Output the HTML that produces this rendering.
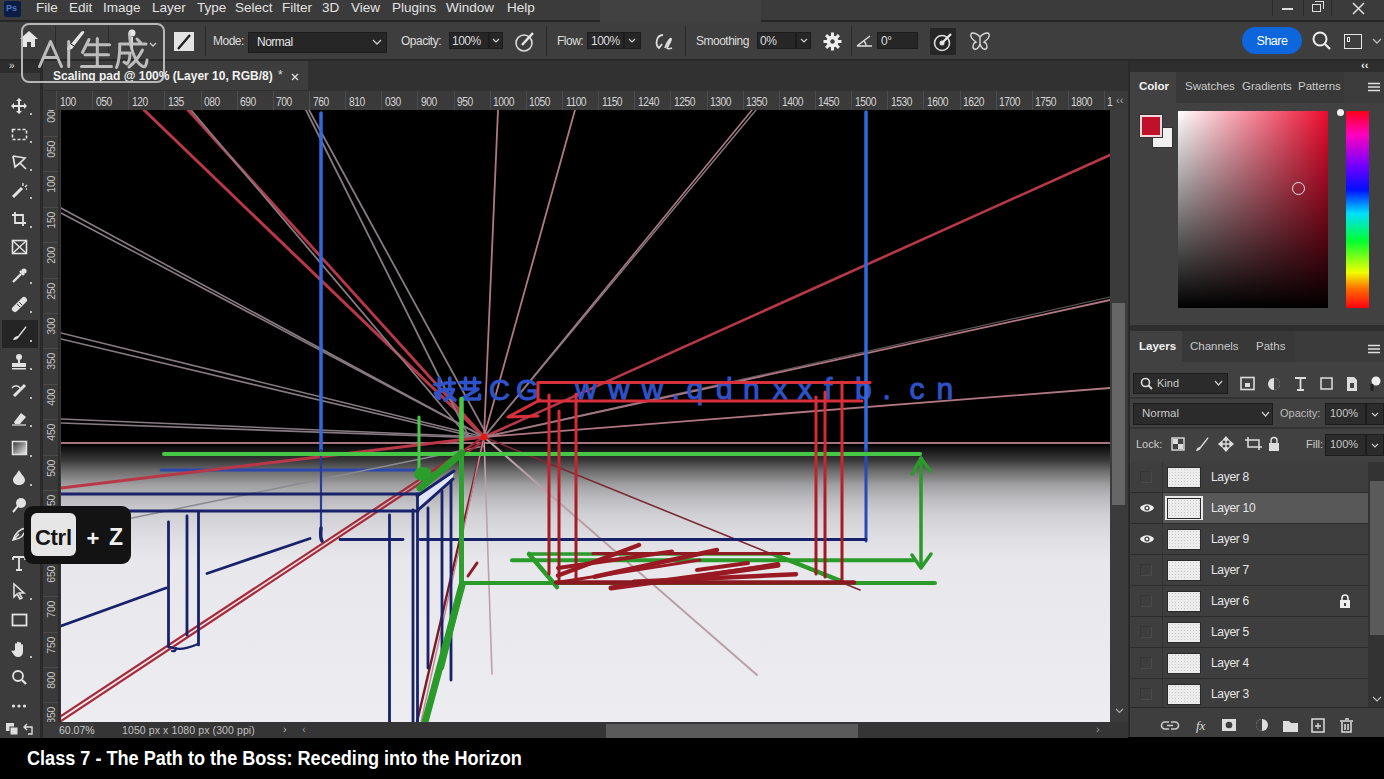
<!DOCTYPE html>
<html><head><meta charset="utf-8">
<style>
*{margin:0;padding:0;box-sizing:border-box}
html,body{width:1384px;height:779px;overflow:hidden;background:#000;font-family:"Liberation Sans",sans-serif;color:#d8d8d8}
.a{position:absolute}
svg{position:absolute;overflow:visible}
#menubar{left:0;top:0;width:1384px;height:20px;background:#3b3b3b}
#menubar span{position:absolute;top:1px;font-size:13.5px;line-height:14px;color:#e2e2e2}
#mline{left:0;top:20px;width:1384px;height:2px;background:#262626}
#optbar{left:0;top:22px;width:1384px;height:37px;background:#3e3e3e}
#oline{left:0;top:59px;width:1384px;height:2px;background:#282828}
.ot{position:absolute;font-size:12px;line-height:14px;color:#dcdcdc;white-space:nowrap;letter-spacing:-0.5px}
.box{position:absolute;background:#262626;border:1px solid #1c1c1c}
.sep{position:absolute;width:1px;background:#2a2a2a}
#tabrow{left:40px;top:61px;width:1088px;height:30px;background:#313131}
#toolbar{left:0;top:73px;width:40px;height:665px;background:#3c3c3c}
#rulerh{left:43px;top:91px;width:1085px;height:19px;background:#3a3a3a}
#rulerv{left:43px;top:110px;width:18px;height:612px;background:#3a3a3a;overflow:hidden}
#canvas{left:61px;top:110px;width:1049px;height:612px;overflow:hidden;background:linear-gradient(#000 0,#000 335px,#0e0e0e 337px,#383838 350px,#6c6c6c 361px,#a0a0a2 375px,#bcbcc0 389px,#d0d0d5 405px,#e0e0e4 430px,#e8e8ec 452px,#edecf0 612px)}
#vscroll{left:1110px;top:110px;width:18px;height:612px;background:#3b3b3b}
#status{left:43px;top:722px;width:1085px;height:16px;background:#353535}
#rpanel{left:1128px;top:61px;width:256px;height:676px;background:#414141}
#caption{left:27px;top:746px;font-size:20px;line-height:24px;font-weight:bold;color:#fff;white-space:nowrap;transform:scaleX(0.905);transform-origin:0 0}
.rl{position:absolute;top:6px;font-size:12.5px;line-height:11px;color:#d4d4d4;letter-spacing:-0.6px;transform:scaleX(0.82);transform-origin:0 0}
.rvl{position:absolute;left:3px;font-size:10.5px;line-height:11px;color:#c4c4c4;writing-mode:vertical-rl;transform:rotate(180deg);letter-spacing:-0.3px}
.pt{position:absolute;font-size:11.5px;line-height:13px;color:#c8c8c8;white-space:nowrap}
.thumb{background-color:#ececec;background-image:radial-gradient(#c8c8c8 0.6px,transparent 0.8px);background-size:3px 3px;border:1px solid #2a2a2a}
</style></head><body>
<!-- MENU BAR -->
<div id="menubar" class="a">
  <div class="a" style="left:4px;top:1px;width:17px;height:16px;background:#0a1d44;border-radius:2px"></div>
  <div class="a" style="left:6px;top:3px;font-size:9px;font-weight:bold;color:#4a78c0">Ps</div>
  <span style="left:36px">File</span><span style="left:69px">Edit</span><span style="left:103px">Image</span><span style="left:152px">Layer</span><span style="left:197px">Type</span><span style="left:235px">Select</span><span style="left:282px">Filter</span><span style="left:322px">3D</span><span style="left:351px">View</span><span style="left:392px">Plugins</span><span style="left:446px">Window</span><span style="left:507px">Help</span>
  <div class="a" style="left:600px;top:0;width:161px;height:28px;background:#414141"></div>
  <div class="a" style="left:1272px;top:0;width:1px;height:16px;background:#2c2c2c"></div>
  <div class="a" style="left:1303px;top:0;width:1px;height:16px;background:#2c2c2c"></div>
  <div class="a" style="left:1331px;top:0;width:1px;height:16px;background:#2c2c2c"></div>
  <div class="a" style="left:1282px;top:8px;width:11px;height:2px;background:#ddd"></div>
  <div class="a" style="left:1312px;top:4px;width:9px;height:8px;border:1.5px solid #ddd"></div>
  <div class="a" style="left:1315px;top:1px;width:9px;height:8px;border-top:1.5px solid #ddd;border-right:1.5px solid #ddd"></div>
  <svg style="left:1352px;top:2px" width="13" height="13"><path d="M1 1L12 12M12 1L1 12" stroke="#e0e0e0" stroke-width="1.5"/></svg>
</div>
<div id="mline" class="a"></div><div class="a" style="left:600px;top:20px;width:161px;height:3px;background:#404040"></div>
<!-- OPTIONS BAR -->
<div id="optbar" class="a">
  <svg style="left:19px;top:8px" width="20" height="18"><path d="M10 1L1 9H4V17H8V12H12V17H16V9H19Z" fill="#e6e6e6"/></svg>
  <div class="sep" style="left:55px;top:4px;height:30px"></div>
  <svg style="left:62px;top:6px" width="24" height="24"><path d="M5 22C5 19 6 17 9 16L19 4C21 2 23 3 22 5L12 18C11 21 8 22 5 22Z" fill="#e6e6e6"/><path d="M9 16L12 18" stroke="#3e3e3e" stroke-width="1.2"/></svg>
  <svg style="left:123px;top:7px" width="34" height="24"><circle cx="9" cy="4" r="3.5" fill="#e8e8e8"/><path d="M9 8V22" stroke="#ddd" stroke-width="2"/><path d="M27 14L30 17L33 14" stroke="#ccc" fill="none" stroke-width="1.3"/></svg>
  <div class="sep" style="left:108px;top:4px;height:30px"></div>
  <div class="a" style="left:174px;top:10px;width:20px;height:19px;background:#e4e4e4"></div>
  <svg style="left:174px;top:10px" width="20" height="19"><path d="M4 17L16 3" stroke="#222" stroke-width="2.4"/></svg>
  <div class="sep" style="left:205px;top:4px;height:30px"></div>
  <div class="ot" style="left:213px;top:12px">Mode:</div>
  <div class="box" style="left:248px;top:10px;width:139px;height:21px"></div>
  <div class="ot" style="left:257px;top:13px;color:#e4e4e4">Normal</div>
  <svg style="left:372px;top:16px" width="10" height="8"><path d="M1 2L5 6L9 2" stroke="#ccc" fill="none" stroke-width="1.3"/></svg>
  <div class="ot" style="left:401px;top:12px">Opacity:</div>
  <div class="box" style="left:449px;top:10px;width:40px;height:17px"></div>
  <div class="box" style="left:489px;top:10px;width:14px;height:17px"></div>
  <div class="ot" style="left:452px;top:12px">100%</div>
  <svg style="left:492px;top:15px" width="8" height="6"><path d="M1 2L4 5L7 2" stroke="#ccc" fill="none" stroke-width="1.2"/></svg>
  <svg style="left:514px;top:9px" width="22" height="22"><circle cx="10" cy="12" r="8" stroke="#d8d8d8" stroke-width="1.6" fill="none"/><path d="M8 14L19 2" stroke="#e8e8e8" stroke-width="2.5"/></svg>
  <div class="sep" style="left:546px;top:4px;height:30px"></div>
  <div class="ot" style="left:557px;top:12px">Flow:</div>
  <div class="box" style="left:587px;top:10px;width:37px;height:17px"></div>
  <div class="box" style="left:624px;top:10px;width:17px;height:17px"></div>
  <div class="ot" style="left:591px;top:12px">100%</div>
  <svg style="left:628px;top:15px" width="8" height="6"><path d="M1 2L4 5L7 2" stroke="#ccc" fill="none" stroke-width="1.2"/></svg>
  <svg style="left:653px;top:10px" width="22" height="20"><path d="M10 3C3 3 2 13 6 16L9 12M12 16C16 6 20 4 17 10C14 16 12 18 19 16" stroke="#ddd" fill="none" stroke-width="1.8"/></svg>
  <div class="sep" style="left:685px;top:4px;height:30px"></div>
  <div class="ot" style="left:696px;top:12px">Smoothing</div>
  <div class="box" style="left:757px;top:10px;width:39px;height:17px"></div>
  <div class="box" style="left:796px;top:10px;width:15px;height:17px"></div>
  <div class="ot" style="left:760px;top:12px">0%</div>
  <svg style="left:800px;top:15px" width="8" height="6"><path d="M1 2L4 5L7 2" stroke="#ccc" fill="none" stroke-width="1.2"/></svg>
  <svg style="left:823px;top:10px" width="20" height="20"><g transform="translate(9.5,9.5)"><circle r="6" fill="#eee"/><circle r="2.2" fill="#3e3e3e"/><path d="M0 -9V9M-9 0H9M-6.4 -6.4L6.4 6.4M6.4 -6.4L-6.4 6.4" stroke="#eee" stroke-width="3"/><circle r="2.2" fill="#3e3e3e"/></g></svg>
  <div class="sep" style="left:851px;top:4px;height:30px"></div>
  <svg style="left:856px;top:12px" width="18" height="14"><path d="M1 12H16M1 12L14 2M8 7C9 8 10 10 10 12" stroke="#e0e0e0" fill="none" stroke-width="1.5"/></svg>
  <div class="box" style="left:877px;top:10px;width:41px;height:17px"></div>
  <div class="ot" style="left:881px;top:12px">0°</div>
  <div class="a" style="left:930px;top:6px;width:26px;height:27px;background:#262626"></div>
  <svg style="left:932px;top:9px" width="22" height="22"><circle cx="10" cy="12" r="7.5" stroke="#ddd" stroke-width="1.6" fill="none"/><circle cx="10" cy="12" r="2.5" fill="#ddd"/><path d="M10 12L19 3" stroke="#eee" stroke-width="2.2"/></svg>
  <svg style="left:969px;top:9px" width="22" height="22"><path d="M11 6C8 2 3 1 2 3C1 6 4 9 7 11C4 12 3 16 5 18C8 19 10 16 11 13C12 16 14 19 17 18C19 16 18 12 15 11C18 9 21 6 20 3C19 1 14 2 11 6ZM11 6V14" stroke="#d8d8d8" fill="none" stroke-width="1.4"/></svg>
  <div class="a" style="left:1242px;top:5px;width:60px;height:27px;border-radius:14px;background:#0d66dc"></div>
  <div class="ot" style="left:1242px;top:12px;width:60px;text-align:center;color:#fff;font-size:12.5px">Share</div>
  <svg style="left:1311px;top:8px" width="22" height="22"><circle cx="9" cy="9" r="6.5" stroke="#eee" stroke-width="2" fill="none"/><path d="M14 14L19 19" stroke="#eee" stroke-width="2.2"/></svg>
  <div class="a" style="left:1344px;top:12px;width:18px;height:15px;border:1.5px solid #e4e4e4"></div>
  <div class="a" style="left:1347px;top:15px;width:3px;height:5px;border:1px solid #e4e4e4"></div>
  <svg style="left:1372px;top:16px" width="10" height="7"><path d="M1 1L5 5L9 1" stroke="#bbb" fill="none" stroke-width="1.3"/></svg>
</div>
<div id="oline" class="a"></div>
<div id="tabrow" class="a">
  <div class="a" style="left:0;top:0;width:268px;height:29px;background:#3d3d3d"></div>
  <div class="ot" style="left:13px;top:8px;font-size:12px;font-weight:bold;color:#f2f2f2;letter-spacing:0px">Scaling pad @ 100% (Layer 10, RGB/8)</div><div class="ot" style="left:238px;top:7px;font-size:12px;color:#ddd">*</div>
  <svg style="left:251px;top:12px" width="8" height="8"><path d="M1 1L7 7M7 1L1 7" stroke="#ddd" stroke-width="1.4"/></svg>
</div>
<div class="a" style="left:0;top:61px;width:40px;height:12px;background:#2d2d2d"></div>
<div class="a" style="left:9px;top:60px;font-size:10px;color:#ddd">»</div>
<div class="a" style="left:40px;top:61px;width:3px;height:677px;background:#2a2a2a"></div>
<div id="toolbar" class="a"></div>
<div class="a" style="left:2px;top:320px;width:36px;height:28px;background:#252525"></div>
<svg style="left:11px;top:97.5px" width="17" height="17"><path d="M8 0L5 3H7V7H3V5L0 8L3 11V9H7V13H5L8 16L11 13H9V9H13V11L16 8L13 5V7H9V3H11Z" fill="#e2e2e2"/></svg><div class="a" style="left:30px;top:112.5px;width:2px;height:2px;background:#bbb"></div><svg style="left:11px;top:125.5px" width="17" height="17"><rect x="1.5" y="3.5" width="14" height="10" fill="none" stroke="#e2e2e2" stroke-width="1.6" stroke-dasharray="3 2"/></svg><div class="a" style="left:30px;top:140.5px;width:2px;height:2px;background:#bbb"></div><svg style="left:11px;top:153.5px" width="17" height="17"><path d="M2 2L14 4L9 9L15 15M2 2L4 13L9 9" fill="none" stroke="#e2e2e2" stroke-width="1.7"/></svg><div class="a" style="left:30px;top:168.5px;width:2px;height:2px;background:#bbb"></div><svg style="left:11px;top:181.5px" width="17" height="17"><path d="M2 15L11 6" stroke="#e2e2e2" stroke-width="3"/><path d="M12 1V4M14 5L16 3M15 7H16" stroke="#e2e2e2" stroke-width="1.3"/></svg><div class="a" style="left:30px;top:196.5px;width:2px;height:2px;background:#bbb"></div><svg style="left:11px;top:210.5px" width="17" height="17"><path d="M4 1V12H15M1 4H12V15" fill="none" stroke="#e2e2e2" stroke-width="1.8"/></svg><div class="a" style="left:30px;top:225.5px;width:2px;height:2px;background:#bbb"></div><svg style="left:11px;top:238.5px" width="17" height="17"><rect x="1.5" y="1.5" width="14" height="13" fill="none" stroke="#e2e2e2" stroke-width="1.6"/><path d="M2 2L15 14M15 2L2 14" stroke="#e2e2e2" stroke-width="1.4"/></svg><svg style="left:11px;top:266.5px" width="17" height="17"><path d="M2 15L10 7M9 4L13 8" stroke="#e2e2e2" stroke-width="2.4"/><circle cx="13" cy="4" r="2.6" fill="#e2e2e2"/></svg><div class="a" style="left:30px;top:281.5px;width:2px;height:2px;background:#bbb"></div><svg style="left:11px;top:295.5px" width="17" height="17"><path d="M4 13L13 4" stroke="#e2e2e2" stroke-width="6" stroke-linecap="round"/><path d="M6 8L9 11M8 6L11 9" stroke="#3c3c3c" stroke-width="1"/></svg><div class="a" style="left:30px;top:310.5px;width:2px;height:2px;background:#bbb"></div><svg style="left:11px;top:324.5px" width="17" height="17"><path d="M2 15C3 12 5 11 7 11L14 2C15 1 16 2 15 3L8 12C7 14 5 15 2 15Z" fill="#e2e2e2"/></svg><div class="a" style="left:30px;top:339.5px;width:2px;height:2px;background:#bbb"></div><svg style="left:11px;top:352.5px" width="17" height="17"><circle cx="8" cy="4" r="3" fill="#e2e2e2"/><path d="M7 6H9V10H7Z" fill="#e2e2e2"/><rect x="1" y="10" width="14" height="4" fill="#e2e2e2"/><rect x="1" y="15" width="14" height="1.5" fill="#e2e2e2"/></svg><div class="a" style="left:30px;top:367.5px;width:2px;height:2px;background:#bbb"></div><svg style="left:11px;top:381.5px" width="17" height="17"><path d="M3 14L14 3" stroke="#e2e2e2" stroke-width="3"/><path d="M1 6C3 3 7 3 9 6" stroke="#e2e2e2" fill="none" stroke-width="1.4"/></svg><div class="a" style="left:30px;top:396.5px;width:2px;height:2px;background:#bbb"></div><svg style="left:11px;top:409.5px" width="17" height="17"><path d="M3 12L10 3L15 7L9 14H4Z" fill="#e2e2e2"/><path d="M1 15H15" stroke="#e2e2e2" stroke-width="1.2"/></svg><div class="a" style="left:30px;top:424.5px;width:2px;height:2px;background:#bbb"></div><svg style="left:11px;top:439.5px" width="17" height="17"><defs><linearGradient id="gg" x1="0" y1="0" x2="1" y2="1"><stop offset="0" stop-color="#333"/><stop offset="1" stop-color="#eee"/></linearGradient></defs><rect x="1.5" y="1.5" width="14" height="13" fill="url(#gg)" stroke="#e2e2e2" stroke-width="1.5"/></svg><div class="a" style="left:30px;top:454.5px;width:2px;height:2px;background:#bbb"></div><svg style="left:11px;top:468.5px" width="17" height="17"><path d="M8 1C10 5 14 8 14 11C14 14 11 16 8 16C5 16 2 14 2 11C2 8 6 5 8 1Z" fill="#e2e2e2"/></svg><div class="a" style="left:30px;top:483.5px;width:2px;height:2px;background:#bbb"></div><svg style="left:11px;top:496.5px" width="17" height="17"><circle cx="10" cy="6" r="5" fill="#e2e2e2"/><path d="M7 9L2 15" stroke="#e2e2e2" stroke-width="2"/></svg><div class="a" style="left:30px;top:511.5px;width:2px;height:2px;background:#bbb"></div><svg style="left:11px;top:525.5px" width="17" height="17"><path d="M2 14C4 8 8 3 15 2C14 9 9 13 2 14ZM2 14L8 8" fill="none" stroke="#e2e2e2" stroke-width="1.6"/></svg><div class="a" style="left:30px;top:540.5px;width:2px;height:2px;background:#bbb"></div><svg style="left:11px;top:554.5px" width="17" height="17"><path d="M2 2H14V5M2 2V5M8 2V15M5 15H11" fill="none" stroke="#e2e2e2" stroke-width="1.8"/></svg><svg style="left:11px;top:582.5px" width="17" height="17"><path d="M3 1V14L6 11L9 16L11 15L8 10H13Z" fill="none" stroke="#e2e2e2" stroke-width="1.5"/></svg><div class="a" style="left:30px;top:597.5px;width:2px;height:2px;background:#bbb"></div><svg style="left:11px;top:611.5px" width="17" height="17"><rect x="1.5" y="2.5" width="14" height="11" fill="none" stroke="#e2e2e2" stroke-width="1.8"/></svg><svg style="left:11px;top:640.5px" width="17" height="17"><path d="M4 9V3C4 2 6 2 6 3V8V1.5C6 .5 8 .5 8 1.5V8V2C8 1 10 1 10 2V8V4C10 3 12 3 12 4V10C12 14 10 16 7 16C4 16 3 14 1 11C0 10 1 9 2 10Z" fill="#e2e2e2"/></svg><div class="a" style="left:30px;top:655.5px;width:2px;height:2px;background:#bbb"></div><svg style="left:11px;top:668.5px" width="17" height="17"><circle cx="7" cy="7" r="5" fill="none" stroke="#e2e2e2" stroke-width="1.8"/><path d="M11 11L15 15" stroke="#e2e2e2" stroke-width="2.4"/></svg><svg style="left:11px;top:697.5px" width="17" height="17"><circle cx="2.5" cy="8" r="1.6" fill="#e2e2e2"/><circle cx="8" cy="8" r="1.6" fill="#e2e2e2"/><circle cx="13.5" cy="8" r="1.6" fill="#e2e2e2"/></svg>
<svg style="left:5px;top:722px" width="34" height="14"><rect x="1" y="1" width="8" height="8" fill="#ddd"/><rect x="5" y="5" width="8" height="8" fill="#ddd" stroke="#3c3c3c"/><path d="M22 2L19 5L22 8M19 5H27V12H23" fill="none" stroke="#ddd" stroke-width="1.4"/></svg>

<div id="rulerh" class="a"><div class="a" style="left:13.0px;top:0;width:1px;height:19px;background:#4c4c4c"></div><div class="rl" style="left:16.5px">100</div><div class="a" style="left:49.1px;top:0;width:1px;height:19px;background:#4c4c4c"></div><div class="rl" style="left:52.6px">050</div><div class="a" style="left:85.3px;top:0;width:1px;height:19px;background:#4c4c4c"></div><div class="rl" style="left:88.8px">120</div><div class="a" style="left:121.4px;top:0;width:1px;height:19px;background:#4c4c4c"></div><div class="rl" style="left:124.9px">135</div><div class="a" style="left:157.6px;top:0;width:1px;height:19px;background:#4c4c4c"></div><div class="rl" style="left:161.1px">080</div><div class="a" style="left:193.7px;top:0;width:1px;height:19px;background:#4c4c4c"></div><div class="rl" style="left:197.2px">690</div><div class="a" style="left:229.8px;top:0;width:1px;height:19px;background:#4c4c4c"></div><div class="rl" style="left:233.3px">700</div><div class="a" style="left:266.0px;top:0;width:1px;height:19px;background:#4c4c4c"></div><div class="rl" style="left:269.5px">760</div><div class="a" style="left:302.1px;top:0;width:1px;height:19px;background:#4c4c4c"></div><div class="rl" style="left:305.6px">810</div><div class="a" style="left:338.3px;top:0;width:1px;height:19px;background:#4c4c4c"></div><div class="rl" style="left:341.8px">030</div><div class="a" style="left:374.4px;top:0;width:1px;height:19px;background:#4c4c4c"></div><div class="rl" style="left:377.9px">900</div><div class="a" style="left:410.5px;top:0;width:1px;height:19px;background:#4c4c4c"></div><div class="rl" style="left:414.0px">950</div><div class="a" style="left:446.7px;top:0;width:1px;height:19px;background:#4c4c4c"></div><div class="rl" style="left:450.2px">1000</div><div class="a" style="left:482.8px;top:0;width:1px;height:19px;background:#4c4c4c"></div><div class="rl" style="left:486.3px">1050</div><div class="a" style="left:519.0px;top:0;width:1px;height:19px;background:#4c4c4c"></div><div class="rl" style="left:522.5px">1100</div><div class="a" style="left:555.1px;top:0;width:1px;height:19px;background:#4c4c4c"></div><div class="rl" style="left:558.6px">1150</div><div class="a" style="left:591.2px;top:0;width:1px;height:19px;background:#4c4c4c"></div><div class="rl" style="left:594.7px">1240</div><div class="a" style="left:627.4px;top:0;width:1px;height:19px;background:#4c4c4c"></div><div class="rl" style="left:630.9px">1250</div><div class="a" style="left:663.5px;top:0;width:1px;height:19px;background:#4c4c4c"></div><div class="rl" style="left:667.0px">1300</div><div class="a" style="left:699.7px;top:0;width:1px;height:19px;background:#4c4c4c"></div><div class="rl" style="left:703.2px">1350</div><div class="a" style="left:735.8px;top:0;width:1px;height:19px;background:#4c4c4c"></div><div class="rl" style="left:739.3px">1400</div><div class="a" style="left:771.9px;top:0;width:1px;height:19px;background:#4c4c4c"></div><div class="rl" style="left:775.4px">1450</div><div class="a" style="left:808.1px;top:0;width:1px;height:19px;background:#4c4c4c"></div><div class="rl" style="left:811.6px">1500</div><div class="a" style="left:844.2px;top:0;width:1px;height:19px;background:#4c4c4c"></div><div class="rl" style="left:847.7px">1530</div><div class="a" style="left:880.4px;top:0;width:1px;height:19px;background:#4c4c4c"></div><div class="rl" style="left:883.9px">1600</div><div class="a" style="left:916.5px;top:0;width:1px;height:19px;background:#4c4c4c"></div><div class="rl" style="left:920.0px">1620</div><div class="a" style="left:952.6px;top:0;width:1px;height:19px;background:#4c4c4c"></div><div class="rl" style="left:956.1px">1700</div><div class="a" style="left:988.8px;top:0;width:1px;height:19px;background:#4c4c4c"></div><div class="rl" style="left:992.3px">1750</div><div class="a" style="left:1024.9px;top:0;width:1px;height:19px;background:#4c4c4c"></div><div class="rl" style="left:1028.4px">1800</div><div class="a" style="left:1061.1px;top:0;width:1px;height:19px;background:#4c4c4c"></div><div class="rl" style="left:1064px">1</div><div class="a" style="left:1073px;top:3px;font-size:11px;color:#aaa">‹‹</div></div>
<div id="rulerv" class="a"><div class="a" style="left:0;top:-9.4px;width:15px;height:1px;background:#4a4a4a"></div><div class="rvl" style="top:-4.4px">000</div><div class="a" style="left:0;top:26.0px;width:15px;height:1px;background:#4a4a4a"></div><div class="rvl" style="top:31.0px">050</div><div class="a" style="left:0;top:61.4px;width:15px;height:1px;background:#4a4a4a"></div><div class="rvl" style="top:66.4px">100</div><div class="a" style="left:0;top:96.8px;width:15px;height:1px;background:#4a4a4a"></div><div class="rvl" style="top:101.8px">150</div><div class="a" style="left:0;top:132.2px;width:15px;height:1px;background:#4a4a4a"></div><div class="rvl" style="top:137.2px">200</div><div class="a" style="left:0;top:167.6px;width:15px;height:1px;background:#4a4a4a"></div><div class="rvl" style="top:172.6px">250</div><div class="a" style="left:0;top:203.0px;width:15px;height:1px;background:#4a4a4a"></div><div class="rvl" style="top:208.0px">300</div><div class="a" style="left:0;top:238.4px;width:15px;height:1px;background:#4a4a4a"></div><div class="rvl" style="top:243.4px">350</div><div class="a" style="left:0;top:273.8px;width:15px;height:1px;background:#4a4a4a"></div><div class="rvl" style="top:278.8px">400</div><div class="a" style="left:0;top:309.2px;width:15px;height:1px;background:#4a4a4a"></div><div class="rvl" style="top:314.2px">450</div><div class="a" style="left:0;top:344.6px;width:15px;height:1px;background:#4a4a4a"></div><div class="rvl" style="top:349.6px">500</div><div class="a" style="left:0;top:380.0px;width:15px;height:1px;background:#4a4a4a"></div><div class="rvl" style="top:385.0px">550</div><div class="a" style="left:0;top:415.4px;width:15px;height:1px;background:#4a4a4a"></div><div class="rvl" style="top:420.4px">600</div><div class="a" style="left:0;top:450.8px;width:15px;height:1px;background:#4a4a4a"></div><div class="rvl" style="top:455.8px">650</div><div class="a" style="left:0;top:486.2px;width:15px;height:1px;background:#4a4a4a"></div><div class="rvl" style="top:491.2px">700</div><div class="a" style="left:0;top:521.6px;width:15px;height:1px;background:#4a4a4a"></div><div class="rvl" style="top:526.6px">750</div><div class="a" style="left:0;top:557.0px;width:15px;height:1px;background:#4a4a4a"></div><div class="rvl" style="top:562.0px">800</div><div class="a" style="left:0;top:592.4px;width:15px;height:1px;background:#4a4a4a"></div><div class="rvl" style="top:597.4px">850</div><div class="a" style="left:15px;top:0;width:2px;height:612px;background:#2c2c2c"></div></div>
<div id="canvas" class="a"><svg width="1049" height="612" viewBox="61 110 1049 612" style="left:0;top:0"><defs><linearGradient id="rg" gradientUnits="userSpaceOnUse" x1="0" y1="380" x2="0" y2="585"><stop offset="0" stop-color="#e0303a"/><stop offset="0.35" stop-color="#d02830"/><stop offset="0.6" stop-color="#a81c26"/><stop offset="1" stop-color="#9a1a22"/></linearGradient></defs><line x1="161" y1="470" x2="415" y2="470" stroke="#2a48b0" stroke-width="2.8" stroke-opacity="1" stroke-linecap="round"/><line x1="144" y1="110" x2="484" y2="437" stroke="#b83848" stroke-width="3" stroke-opacity="1" stroke-linecap="round"/><line x1="188" y1="110" x2="484" y2="437" stroke="#b83848" stroke-width="2.8" stroke-opacity="1" stroke-linecap="round"/><line x1="191" y1="110" x2="468" y2="437" stroke="#887a82" stroke-width="1.8" stroke-opacity="1" stroke-linecap="round"/><line x1="306" y1="110" x2="469" y2="437" stroke="#887a82" stroke-width="1.8" stroke-opacity="1" stroke-linecap="round"/><line x1="309" y1="110" x2="488" y2="437" stroke="#887a82" stroke-width="1.8" stroke-opacity="1" stroke-linecap="round"/><line x1="498" y1="110" x2="484" y2="437" stroke="#b07882" stroke-width="1.8" stroke-opacity="1" stroke-linecap="round"/><line x1="575" y1="110" x2="484" y2="437" stroke="#b07882" stroke-width="1.8" stroke-opacity="1" stroke-linecap="round"/><line x1="752" y1="110" x2="484" y2="437" stroke="#b07882" stroke-width="1.6" stroke-opacity="1" stroke-linecap="round"/><line x1="756" y1="110" x2="484" y2="437" stroke="#887a82" stroke-width="1.4" stroke-opacity="1" stroke-linecap="round"/><line x1="61" y1="208" x2="484" y2="437" stroke="#887a82" stroke-width="1.6" stroke-opacity="1" stroke-linecap="round"/><line x1="61" y1="213" x2="484" y2="437" stroke="#887a82" stroke-width="1.6" stroke-opacity="1" stroke-linecap="round"/><line x1="61" y1="333" x2="484" y2="437" stroke="#887a82" stroke-width="1.6" stroke-opacity="1" stroke-linecap="round"/><line x1="61" y1="339" x2="484" y2="439" stroke="#887a82" stroke-width="1.6" stroke-opacity="1" stroke-linecap="round"/><line x1="61" y1="419" x2="484" y2="437" stroke="#887a82" stroke-width="1.6" stroke-opacity="1" stroke-linecap="round"/><line x1="61" y1="423" x2="484" y2="438" stroke="#887a82" stroke-width="1.6" stroke-opacity="1" stroke-linecap="round"/><line x1="1110" y1="155" x2="484" y2="437" stroke="#b83848" stroke-width="2.6" stroke-opacity="1" stroke-linecap="round"/><line x1="1110" y1="300" x2="484" y2="437" stroke="#b07882" stroke-width="1.8" stroke-opacity="1" stroke-linecap="round"/><line x1="1110" y1="297" x2="484" y2="437" stroke="#887a82" stroke-width="1.2" stroke-opacity="0.7" stroke-linecap="round"/><line x1="1110" y1="388" x2="484" y2="437" stroke="#b07882" stroke-width="1.8" stroke-opacity="1" stroke-linecap="round"/><line x1="61" y1="443" x2="1110" y2="443" stroke="#a47680" stroke-width="2.2" stroke-opacity="1" stroke-linecap="round"/><line x1="61" y1="488" x2="484" y2="437" stroke="#b83848" stroke-width="2.8" stroke-opacity="1" stroke-linecap="round"/><line x1="61" y1="532.5" x2="484" y2="446" stroke="#8a8a92" stroke-width="1.5" stroke-opacity="1" stroke-linecap="round"/><line x1="757" y1="675" x2="484" y2="437" stroke="#b8a0a6" stroke-width="2" stroke-opacity="1" stroke-linecap="round"/><line x1="492" y1="674" x2="484" y2="437" stroke="#c0a0a8" stroke-width="1.6" stroke-opacity="1" stroke-linecap="round"/><line x1="860" y1="590" x2="484" y2="437" stroke="#7a2a34" stroke-width="1.6" stroke-opacity="1" stroke-linecap="round"/><line x1="61" y1="716" x2="484" y2="437" stroke="#a82a3a" stroke-width="2.2" stroke-opacity="1" stroke-linecap="round"/><line x1="61" y1="721" x2="484" y2="441" stroke="#a82a3a" stroke-width="2.2" stroke-opacity="1" stroke-linecap="round"/><line x1="484" y1="437" x2="417" y2="722" stroke="#7a1a28" stroke-width="2.4" stroke-opacity="1" stroke-linecap="round"/><line x1="484" y1="437" x2="421" y2="722" stroke="#c08890" stroke-width="1.4" stroke-opacity="1" stroke-linecap="round"/><text x="575" y="398.5" font-family="Liberation Sans" font-size="30" fill="#2f52c8" stroke="#2f52c8" stroke-width="1">w</text><text x="608" y="398.5" font-family="Liberation Sans" font-size="30" fill="#2f52c8" stroke="#2f52c8" stroke-width="1">w</text><text x="641.5" y="398.5" font-family="Liberation Sans" font-size="30" fill="#2f52c8" stroke="#2f52c8" stroke-width="1">w</text><text x="671.5" y="398.5" font-family="Liberation Sans" font-size="30" fill="#2f52c8" stroke="#2f52c8" stroke-width="1">.</text><text x="686.5" y="398.5" font-family="Liberation Sans" font-size="30" fill="#2f52c8" stroke="#2f52c8" stroke-width="1">q</text><text x="716" y="398.5" font-family="Liberation Sans" font-size="30" fill="#2f52c8" stroke="#2f52c8" stroke-width="1">d</text><text x="743" y="398.5" font-family="Liberation Sans" font-size="30" fill="#2f52c8" stroke="#2f52c8" stroke-width="1">n</text><text x="772.5" y="398.5" font-family="Liberation Sans" font-size="30" fill="#2f52c8" stroke="#2f52c8" stroke-width="1">x</text><text x="797.5" y="398.5" font-family="Liberation Sans" font-size="30" fill="#2f52c8" stroke="#2f52c8" stroke-width="1">x</text><text x="824" y="398.5" font-family="Liberation Sans" font-size="30" fill="#2f52c8" stroke="#2f52c8" stroke-width="1">f</text><text x="855" y="398.5" font-family="Liberation Sans" font-size="30" fill="#2f52c8" stroke="#2f52c8" stroke-width="1">b</text><text x="882.5" y="398.5" font-family="Liberation Sans" font-size="30" fill="#2f52c8" stroke="#2f52c8" stroke-width="1">.</text><text x="909.5" y="398.5" font-family="Liberation Sans" font-size="30" fill="#2f52c8" stroke="#2f52c8" stroke-width="1">c</text><text x="936.5" y="398.5" font-family="Liberation Sans" font-size="30" fill="#2f52c8" stroke="#2f52c8" stroke-width="1">n</text><text x="489" y="400" font-family="Liberation Sans" font-size="29" fill="#2f52c8" stroke="#2f52c8" stroke-width="1">C</text><text x="516" y="400" font-family="Liberation Sans" font-size="29" fill="#2f52c8" stroke="#2f52c8" stroke-width="1">G</text><path d="M435 384.5H443.5M439.3 378V398.5L436.5 396.5M435.5 393.5L444 389.5M445 383H454.5M449.8 378V387.5M445.5 389.5H453.5C451.5 394 448.5 398 445 400M447.5 392.5C449.5 396 451.5 398 455 400" stroke="#2f52c8" stroke-width="3.6" stroke-opacity="1" fill="none" stroke-linecap="round" stroke-linejoin="round"/><path d="M460 382.5H480M465.5 378V386.5M474.5 378V386.5M462.5 389H478C472 393 466 396 461.5 399H479.5V395" stroke="#2f52c8" stroke-width="3.6" stroke-opacity="1" fill="none" stroke-linecap="round" stroke-linejoin="round"/><line x1="321" y1="113" x2="321" y2="450" stroke="#2f6ae0" stroke-width="3.5" stroke-opacity="1" stroke-linecap="round"/><line x1="321" y1="450" x2="321" y2="536" stroke="#2a3c98" stroke-width="2.2" stroke-opacity="1" stroke-linecap="round"/><path d="M321 528 Q320 538 322 541" stroke="#1a2470" stroke-width="3.5" stroke-opacity="1" fill="none" stroke-linecap="round" stroke-linejoin="round"/><line x1="866" y1="112" x2="866" y2="450" stroke="#2f6ae0" stroke-width="3.5" stroke-opacity="1" stroke-linecap="round"/><line x1="866" y1="450" x2="866" y2="541" stroke="#2c48b8" stroke-width="3" stroke-opacity="1" stroke-linecap="round"/><polygon points="419,494 454,471 453,477 418,510" fill="#dfe5f7"/><line x1="61" y1="494" x2="419" y2="494" stroke="#18226a" stroke-width="3" stroke-opacity="1" stroke-linecap="round"/><line x1="128" y1="511" x2="418" y2="511" stroke="#18226a" stroke-width="3" stroke-opacity="1" stroke-linecap="round"/><line x1="417" y1="496" x2="454" y2="471" stroke="#18226a" stroke-width="3" stroke-opacity="1" stroke-linecap="round"/><line x1="418" y1="510" x2="453" y2="479" stroke="#18226a" stroke-width="3" stroke-opacity="1" stroke-linecap="round"/><line x1="168.5" y1="522" x2="168.5" y2="647" stroke="#18226a" stroke-width="2.8" stroke-opacity="1" stroke-linecap="round"/><line x1="187" y1="516" x2="187" y2="635" stroke="#18226a" stroke-width="2.8" stroke-opacity="1" stroke-linecap="round"/><line x1="198.5" y1="512" x2="198.5" y2="645" stroke="#18226a" stroke-width="2.8" stroke-opacity="1" stroke-linecap="round"/><line x1="389.5" y1="515" x2="389.5" y2="722" stroke="#18226a" stroke-width="2.8" stroke-opacity="1" stroke-linecap="round"/><line x1="413" y1="510" x2="413" y2="722" stroke="#18226a" stroke-width="2.8" stroke-opacity="1" stroke-linecap="round"/><line x1="417.5" y1="494" x2="417.5" y2="722" stroke="#18226a" stroke-width="2.8" stroke-opacity="1" stroke-linecap="round"/><line x1="428" y1="508" x2="428" y2="668" stroke="#18226a" stroke-width="2.8" stroke-opacity="1" stroke-linecap="round"/><line x1="442" y1="491" x2="442" y2="665" stroke="#18226a" stroke-width="2.8" stroke-opacity="1" stroke-linecap="round"/><line x1="451" y1="481" x2="451" y2="680" stroke="#18226a" stroke-width="2.8" stroke-opacity="1" stroke-linecap="round"/><path d="M176 648 Q176 652 172 651" stroke="#18226a" stroke-width="2.2" stroke-opacity="1" fill="none" stroke-linecap="round" stroke-linejoin="round"/><path d="M170 647 Q180 652 198 644" stroke="#18226a" stroke-width="2.2" stroke-opacity="1" fill="none" stroke-linecap="round" stroke-linejoin="round"/><line x1="340" y1="539.5" x2="403" y2="539.5" stroke="#18226a" stroke-width="2.8" stroke-opacity="1" stroke-linecap="round"/><line x1="420" y1="539.5" x2="866" y2="539.5" stroke="#18226a" stroke-width="2.8" stroke-opacity="1" stroke-linecap="round"/><line x1="61" y1="626" x2="166" y2="588" stroke="#18226a" stroke-width="2.8" stroke-opacity="1" stroke-linecap="round"/><line x1="207" y1="573.5" x2="310" y2="538.5" stroke="#18226a" stroke-width="2.8" stroke-opacity="1" stroke-linecap="round"/><line x1="164" y1="454" x2="920" y2="454" stroke="#46c846" stroke-width="4" stroke-opacity="1" stroke-linecap="round"/><line x1="461.5" y1="399" x2="461.5" y2="456" stroke="#46c846" stroke-width="4.5" stroke-opacity="1" stroke-linecap="round"/><line x1="461.5" y1="456" x2="461.5" y2="584" stroke="#2fa02f" stroke-width="5" stroke-opacity="1" stroke-linecap="round"/><line x1="419" y1="417" x2="419" y2="472" stroke="#46c846" stroke-width="3" stroke-opacity="1" stroke-linecap="round"/><ellipse cx="423" cy="474" rx="9" ry="7" fill="#2c9e2c"/><path d="M462 453 L420 488" stroke="#2a9a2a" stroke-width="7" stroke-opacity="1" fill="none" stroke-linecap="round" stroke-linejoin="round"/><line x1="461" y1="583" x2="935" y2="583" stroke="#2a9a2a" stroke-width="4" stroke-opacity="1" stroke-linecap="round"/><line x1="512" y1="560.3" x2="914" y2="560.3" stroke="#2a9a2a" stroke-width="4" stroke-opacity="1" stroke-linecap="round"/><line x1="529" y1="554" x2="773" y2="554" stroke="#2a9a2a" stroke-width="3.5" stroke-opacity="1" stroke-linecap="round"/><line x1="529" y1="554" x2="557" y2="587" stroke="#2a9a2a" stroke-width="4.5" stroke-opacity="1" stroke-linecap="round"/><line x1="773" y1="554" x2="841" y2="581" stroke="#2a9a2a" stroke-width="4.5" stroke-opacity="1" stroke-linecap="round"/><path d="M462 585 L425 722" stroke="#2a9a2a" stroke-width="7" stroke-opacity="1" fill="none" stroke-linecap="round" stroke-linejoin="round"/><path d="M459 600 L442 668" stroke="#2a9a2a" stroke-width="4" stroke-opacity="1" fill="none" stroke-linecap="round" stroke-linejoin="round"/><line x1="921" y1="458" x2="921" y2="566" stroke="#2a9a2a" stroke-width="3.5" stroke-opacity="1" stroke-linecap="round"/><path d="M912 474 L921 458 L930 471" stroke="#2a9a2a" stroke-width="3.5" stroke-opacity="1" fill="none" stroke-linecap="round" stroke-linejoin="round"/><path d="M912 555 L921 568 L931 554" stroke="#2a9a2a" stroke-width="3.5" stroke-opacity="1" fill="none" stroke-linecap="round" stroke-linejoin="round"/><line x1="468" y1="576" x2="477" y2="563" stroke="#8a1e28" stroke-width="3" stroke-opacity="1" stroke-linecap="round"/><line x1="538" y1="382.5" x2="870" y2="382.5" stroke="#d8303a" stroke-width="3" stroke-opacity="1" stroke-linecap="round"/><line x1="538" y1="401" x2="862" y2="401" stroke="#d8303a" stroke-width="3" stroke-opacity="1" stroke-linecap="round"/><line x1="538" y1="382.5" x2="538" y2="401" stroke="#d8303a" stroke-width="3" stroke-opacity="1" stroke-linecap="round"/><path d="M540 400 L508 417 L538 416" stroke="#d8303a" stroke-width="3" stroke-opacity="1" fill="none" stroke-linecap="round" stroke-linejoin="round"/><line x1="549" y1="395" x2="549" y2="574" stroke="url(#rg)" stroke-width="3" stroke-linecap="round"/><line x1="559" y1="411" x2="559" y2="580" stroke="url(#rg)" stroke-width="3" stroke-linecap="round"/><line x1="576" y1="394" x2="576" y2="581" stroke="url(#rg)" stroke-width="3" stroke-linecap="round"/><line x1="816" y1="397" x2="816" y2="574" stroke="url(#rg)" stroke-width="3" stroke-linecap="round"/><line x1="825" y1="392" x2="825" y2="577" stroke="url(#rg)" stroke-width="3" stroke-linecap="round"/><line x1="842" y1="382" x2="842" y2="581" stroke="url(#rg)" stroke-width="3" stroke-linecap="round"/><line x1="593" y1="553.5" x2="789" y2="553.5" stroke="#8e1a22" stroke-width="3" stroke-opacity="1" stroke-linecap="round"/><line x1="558" y1="575.5" x2="639" y2="545" stroke="#9a1a24" stroke-width="4.5" stroke-opacity="1" stroke-linecap="round"/><line x1="558" y1="568" x2="672" y2="551.4" stroke="#9a1a24" stroke-width="4" stroke-opacity="1" stroke-linecap="round"/><line x1="594.6" y1="576.7" x2="717" y2="550" stroke="#9a1a24" stroke-width="4.5" stroke-opacity="1" stroke-linecap="round"/><line x1="611" y1="588" x2="778" y2="565.3" stroke="#9a1a24" stroke-width="5" stroke-opacity="1" stroke-linecap="round"/><line x1="634" y1="581.8" x2="796" y2="574.2" stroke="#9a1a24" stroke-width="4.5" stroke-opacity="1" stroke-linecap="round"/><line x1="672" y1="580.5" x2="778" y2="564" stroke="#9a1a24" stroke-width="4" stroke-opacity="1" stroke-linecap="round"/><line x1="697" y1="570" x2="748" y2="563" stroke="#9a1a24" stroke-width="4" stroke-opacity="1" stroke-linecap="round"/><line x1="560" y1="582" x2="700" y2="560" stroke="#9a1a24" stroke-width="3" stroke-opacity="1" stroke-linecap="round"/><line x1="556" y1="582.5" x2="854" y2="582.5" stroke="#8a1820" stroke-width="4.5" stroke-opacity="1" stroke-linecap="round"/><circle cx="484" cy="437" r="3.5" fill="#e01818"/></svg></div>
<div id="vscroll" class="a"><div class="a" style="left:2px;top:193px;width:13px;height:202px;background:#666"></div><svg style="left:5px;top:598px" width="9" height="6"><path d="M1 1L4.5 4.5L8 1" stroke="#aaa" fill="none" stroke-width="1.2"/></svg></div>
<div id="status" class="a">
  <div class="a" style="left:0;top:1px;width:51px;height:15px;background:#3b3b3b"></div>
  <div class="a" style="left:16px;top:2px;font-size:10.5px;color:#c8c8c8">60.07%</div>
  <div class="a" style="left:79px;top:2px;font-size:10.5px;color:#c0c0c0;letter-spacing:0.1px">1050 px x 1080 px (300 ppi)</div>
  <div class="a" style="left:240px;top:1px;font-size:11px;color:#bbb">›</div>
  <div class="a" style="left:259px;top:1px;font-size:11px;color:#999">‹</div>
  <div class="a" style="left:563px;top:2px;width:252px;height:14px;background:#5a5a5a"></div>
  <div class="a" style="left:1053px;top:1px;font-size:11px;color:#999">›</div>
</div>
<!-- overlays -->
<div class="a" style="left:21px;top:23px;width:144px;height:60px;border:2.5px solid rgba(196,196,196,0.9);border-radius:8px"></div>
<svg style="left:0;top:0" width="170" height="90"><g stroke="rgba(200,200,200,0.92)" stroke-width="3" fill="none" stroke-linecap="round" stroke-linejoin="round">
<path d="M39.5 66.5L50.5 41.5L61.5 66.5M44 57.5H57"/><path d="M68.7 41.5V66.5"/>
<path d="M89 39.5L82.5 52.5M86.5 44.8H109.5M97.3 38.5V66.5M85 54.8H108.5M81.5 66.5H111.5"/>
<path d="M119.5 44H146M119.8 44C119.8 56 119 62 116.5 67.5M121 53H130C130 58 129 62 127 64L124 62M129.5 33.5C130 48 135 62 142 66C145 68 146.5 66 147 60M142.5 50C139 57 134 63 129 67M137 39L140.5 42.5"/>
</g></svg>
<div class="a" style="left:24px;top:506px;width:107px;height:58px;background:#131313;border-radius:9px"></div>
<div class="a" style="left:31px;top:513px;width:45px;height:43px;background:#e6e6e6;border-radius:6px"></div>
<div class="a" style="left:35px;top:525px;font-size:22px;line-height:26px;font-weight:bold;color:#151515;letter-spacing:-0.3px">Ctrl</div>
<div class="a" style="left:86.5px;top:525.5px;font-size:22px;line-height:26px;font-weight:bold;color:#f0f0f0">+</div>
<div class="a" style="left:109px;top:524px;font-size:23px;line-height:26px;font-weight:bold;color:#f0f0f0">Z</div>

<div id="rpanel" class="a"></div>
<div class="a" style="left:1128px;top:61px;width:2px;height:676px;background:#2a2a2a"></div>
<div class="a" style="left:1130px;top:61px;width:254px;height:11px;background:#2e2e2e"></div>
<div class="a" style="left:1361px;top:59px;font-size:11px;color:#eee;font-weight:bold">‹‹</div>
<!-- color tabs -->
<div class="a" style="left:1176px;top:72px;width:168px;height:31px;background:#383838"></div>
<div class="a" style="left:1344px;top:72px;width:40px;height:31px;background:#3c3c3c"></div>
<div class="pt" style="left:1139px;top:80px;color:#f2f2f2;font-weight:bold">Color</div>
<div class="pt" style="left:1185px;top:80px">Swatches</div>
<div class="pt" style="left:1242px;top:80px">Gradients</div>
<div class="pt" style="left:1298px;top:80px">Patterns</div>
<svg style="left:1368px;top:82px" width="12" height="10"><path d="M0 1.5H12M0 5H12M0 8.5H12" stroke="#e0e0e0" stroke-width="1.6"/></svg>
<!-- swatches -->
<div class="a" style="left:1152px;top:127px;width:21px;height:21px;background:#f0f0f0;border:1px solid #333"></div>
<div class="a" style="left:1140px;top:115px;width:22px;height:22px;background:#c0102a;border:2px solid #f0d8dc;outline:1px solid #333"></div>
<!-- color field -->
<div class="a" style="left:1178px;top:111px;width:150px;height:197px;background:linear-gradient(to bottom,rgba(0,0,0,0),#000),linear-gradient(to right,#fff,#ec0b2e)"></div>
<div class="a" style="left:1292px;top:182px;width:13px;height:13px;border-radius:50%;border:1.3px solid #e8e8e8"></div>
<div class="a" style="left:1346px;top:111px;width:23px;height:197px;background:linear-gradient(#ff0018 0%,#ff00c0 12%,#7000ff 28%,#0010ff 40%,#00e0ff 52%,#00ff30 66%,#f0ff00 82%,#ff7000 90%,#ff0010 100%)"></div>
<div class="a" style="left:1337px;top:109px;width:7px;height:7px;border-radius:50%;background:#f4f4f4"></div>
<!-- layers -->
<div class="a" style="left:1130px;top:325px;width:254px;height:6px;background:#2e2e2e"></div>
<div class="a" style="left:1182px;top:331px;width:113px;height:31px;background:#383838"></div>
<div class="a" style="left:1295px;top:331px;width:89px;height:31px;background:#3b3b3b"></div>
<div class="pt" style="left:1139px;top:340px;color:#f2f2f2;font-weight:bold">Layers</div>
<div class="pt" style="left:1190px;top:340px">Channels</div>
<div class="pt" style="left:1256px;top:340px">Paths</div>
<svg style="left:1368px;top:344px" width="12" height="10"><path d="M0 1.5H12M0 5H12M0 8.5H12" stroke="#e0e0e0" stroke-width="1.6"/></svg>
<div class="box" style="left:1133px;top:373px;width:95px;height:21px;background:#2b2b2b"></div>
<svg style="left:1140px;top:377px" width="14" height="14"><circle cx="5.5" cy="5.5" r="4" stroke="#ddd" stroke-width="1.6" fill="none"/><path d="M8.5 8.5L12 12" stroke="#ddd" stroke-width="1.8"/></svg>
<div class="pt" style="left:1157px;top:377px;font-size:11px">Kind</div>
<svg style="left:1214px;top:380px" width="9" height="6"><path d="M1 1L4.5 5L8 1" stroke="#ccc" fill="none" stroke-width="1.2"/></svg>
<svg style="left:1240px;top:376px" width="150" height="16">
 <rect x="1" y="1.5" width="13" height="12" fill="none" stroke="#ddd" stroke-width="1.6"/><rect x="5" y="7" width="5" height="4" fill="#ddd"/>
 <circle cx="34" cy="8" r="6" fill="#ddd"/><path d="M34 2A6 6 0 0 1 34 14Z" fill="#444"/>
 <path d="M55 2H66M60.5 2V14M57 14H64" stroke="#ddd" stroke-width="1.8" fill="none"/>
 <rect x="81" y="2" width="11" height="11" fill="none" stroke="#ddd" stroke-width="1.5"/>
 <path d="M107 1H114L117 4V15H107Z" fill="#ddd"/><rect x="110" y="7" width="4" height="5" fill="#444"/>
 <circle cx="136" cy="5" r="4.5" fill="#eee"/><path d="M132 8V15" stroke="#222" stroke-width="3"/>
</svg>
<div class="a" style="left:1130px;top:397px;width:254px;height:2px;background:#333"></div><div class="a" style="left:1130px;top:427px;width:254px;height:2px;background:#333"></div><div class="box" style="left:1133px;top:403px;width:140px;height:22px;background:#2b2b2b"></div>
<div class="pt" style="left:1142px;top:407px;font-size:11.5px">Normal</div>
<svg style="left:1261px;top:411px" width="9" height="6"><path d="M1 1L4.5 5L8 1" stroke="#ccc" fill="none" stroke-width="1.2"/></svg>
<div class="pt" style="left:1280px;top:407px;font-size:11px;color:#bbb">Opacity:</div>
<div class="box" style="left:1325px;top:403px;width:41px;height:22px;background:#2b2b2b"></div>
<div class="box" style="left:1366px;top:403px;width:18px;height:22px;background:#2b2b2b"></div>
<div class="pt" style="left:1330px;top:407px;font-size:11px">100%</div>
<svg style="left:1371px;top:412px" width="8" height="5"><path d="M1 1L4 4L7 1" stroke="#ccc" fill="none" stroke-width="1.2"/></svg>
<div class="pt" style="left:1136px;top:438px;font-size:11px;color:#ccc">Lock:</div>
<svg style="left:1170px;top:436px" width="115" height="17">
 <rect x="2" y="2" width="12" height="12" fill="none" stroke="#ddd" stroke-width="1.4"/><rect x="3" y="3" width="5" height="5" fill="#ddd"/><rect x="8" y="8" width="5" height="5" fill="#ddd"/>
 <path d="M26 15C27 12 28 11 30 11L37 2C38 1 39 2 38 3L31 12C30 14 28 15 26 15Z" fill="#ddd"/>
 <path d="M56 1V15M49 8H63M56 1L53.5 4H58.5ZM56 15L53.5 12H58.5ZM49 8L52 5.5V10.5ZM63 8L60 5.5V10.5Z" stroke="#ddd" stroke-width="1.4" fill="#ddd"/>
 <path d="M75 4H89V14M78 1V11H92" fill="none" stroke="#ddd" stroke-width="1.5"/>
 <path d="M101 7V4.5A3 3 0 0 1 107 4.5V7" stroke="#ddd" stroke-width="1.5" fill="none"/><rect x="99" y="7" width="10" height="8" fill="#ddd"/>
</svg>
<div class="pt" style="left:1306px;top:438px;font-size:11px;color:#ccc">Fill:</div>
<div class="box" style="left:1325px;top:434px;width:41px;height:22px;background:#2b2b2b"></div>
<div class="box" style="left:1366px;top:434px;width:18px;height:22px;background:#2b2b2b"></div>
<div class="pt" style="left:1330px;top:438px;font-size:11px">100%</div>
<svg style="left:1371px;top:443px" width="8" height="5"><path d="M1 1L4 4L7 1" stroke="#ccc" fill="none" stroke-width="1.2"/></svg>
<div class="a" style="left:1130px;top:462px;width:238px;height:30px;background:#3e3e3e"></div><div class="a" style="left:1130px;top:492px;width:238px;height:1px;background:#2c2c2c"></div><div class="a" style="left:1162px;top:462px;width:1px;height:30px;background:#333"></div><div class="a" style="left:1140px;top:471px;width:12px;height:12px;border:1px solid #4a4a4a;border-left-color:#363636;border-top-color:#363636"></div><div class="a thumb" style="left:1167px;top:467px;width:34px;height:21px"></div><div class="pt" style="left:1211px;top:471px;font-size:12px;color:#e6e6e6;letter-spacing:-0.3px">Layer 8</div><div class="a" style="left:1130px;top:493px;width:238px;height:30px;background:#3e3e3e"></div><div class="a" style="left:1163px;top:493px;width:205px;height:30px;background:#585858"></div><div class="a" style="left:1130px;top:523px;width:238px;height:1px;background:#2c2c2c"></div><div class="a" style="left:1162px;top:493px;width:1px;height:30px;background:#333"></div><svg style="left:1139px;top:502px" width="16" height="12"><path d="M1 6C4 1 12 1 15 6C12 11 4 11 1 6Z" fill="#f0f0f0"/><circle cx="8" cy="6" r="2.6" fill="#3e3e3e"/><circle cx="8" cy="6" r="1.3" fill="#f0f0f0"/></svg><div class="a" style="left:1165px;top:496px;width:38px;height:24px;border:2px solid #eaeaea;background:#e4e4e4"></div><div class="a thumb" style="left:1167px;top:498px;width:34px;height:21px"></div><div class="pt" style="left:1211px;top:502px;font-size:12px;color:#e6e6e6;letter-spacing:-0.3px">Layer 10</div><div class="a" style="left:1130px;top:524px;width:238px;height:30px;background:#3e3e3e"></div><div class="a" style="left:1130px;top:554px;width:238px;height:1px;background:#2c2c2c"></div><div class="a" style="left:1162px;top:524px;width:1px;height:30px;background:#333"></div><svg style="left:1139px;top:533px" width="16" height="12"><path d="M1 6C4 1 12 1 15 6C12 11 4 11 1 6Z" fill="#f0f0f0"/><circle cx="8" cy="6" r="2.6" fill="#3e3e3e"/><circle cx="8" cy="6" r="1.3" fill="#f0f0f0"/></svg><div class="a thumb" style="left:1167px;top:529px;width:34px;height:21px"></div><div class="pt" style="left:1211px;top:533px;font-size:12px;color:#e6e6e6;letter-spacing:-0.3px">Layer 9</div><div class="a" style="left:1130px;top:555px;width:238px;height:30px;background:#3e3e3e"></div><div class="a" style="left:1130px;top:585px;width:238px;height:1px;background:#2c2c2c"></div><div class="a" style="left:1162px;top:555px;width:1px;height:30px;background:#333"></div><div class="a" style="left:1140px;top:564px;width:12px;height:12px;border:1px solid #4a4a4a;border-left-color:#363636;border-top-color:#363636"></div><div class="a thumb" style="left:1167px;top:560px;width:34px;height:21px"></div><div class="pt" style="left:1211px;top:564px;font-size:12px;color:#e6e6e6;letter-spacing:-0.3px">Layer 7</div><div class="a" style="left:1130px;top:586px;width:238px;height:30px;background:#3e3e3e"></div><div class="a" style="left:1130px;top:616px;width:238px;height:1px;background:#2c2c2c"></div><div class="a" style="left:1162px;top:586px;width:1px;height:30px;background:#333"></div><div class="a" style="left:1140px;top:595px;width:12px;height:12px;border:1px solid #4a4a4a;border-left-color:#363636;border-top-color:#363636"></div><div class="a thumb" style="left:1167px;top:591px;width:34px;height:21px"></div><div class="pt" style="left:1211px;top:595px;font-size:12px;color:#e6e6e6;letter-spacing:-0.3px">Layer 6</div><svg style="left:1339px;top:594px" width="12" height="14"><path d="M3 6V4A3 3 0 0 1 9 4V6" stroke="#eee" stroke-width="1.6" fill="none"/><rect x="1" y="6" width="10" height="8" fill="#eee"/><rect x="5" y="9" width="2" height="3" fill="#444"/></svg><div class="a" style="left:1130px;top:617px;width:238px;height:30px;background:#3e3e3e"></div><div class="a" style="left:1130px;top:647px;width:238px;height:1px;background:#2c2c2c"></div><div class="a" style="left:1162px;top:617px;width:1px;height:30px;background:#333"></div><div class="a" style="left:1140px;top:626px;width:12px;height:12px;border:1px solid #4a4a4a;border-left-color:#363636;border-top-color:#363636"></div><div class="a thumb" style="left:1167px;top:622px;width:34px;height:21px"></div><div class="pt" style="left:1211px;top:626px;font-size:12px;color:#e6e6e6;letter-spacing:-0.3px">Layer 5</div><div class="a" style="left:1130px;top:648px;width:238px;height:30px;background:#3e3e3e"></div><div class="a" style="left:1130px;top:678px;width:238px;height:1px;background:#2c2c2c"></div><div class="a" style="left:1162px;top:648px;width:1px;height:30px;background:#333"></div><div class="a" style="left:1140px;top:657px;width:12px;height:12px;border:1px solid #4a4a4a;border-left-color:#363636;border-top-color:#363636"></div><div class="a thumb" style="left:1167px;top:653px;width:34px;height:21px"></div><div class="pt" style="left:1211px;top:657px;font-size:12px;color:#e6e6e6;letter-spacing:-0.3px">Layer 4</div><div class="a" style="left:1130px;top:679px;width:238px;height:30px;background:#3e3e3e"></div><div class="a" style="left:1130px;top:709px;width:238px;height:1px;background:#2c2c2c"></div><div class="a" style="left:1162px;top:679px;width:1px;height:30px;background:#333"></div><div class="a" style="left:1140px;top:688px;width:12px;height:12px;border:1px solid #4a4a4a;border-left-color:#363636;border-top-color:#363636"></div><div class="a thumb" style="left:1167px;top:684px;width:34px;height:21px"></div><div class="pt" style="left:1211px;top:688px;font-size:12px;color:#e6e6e6;letter-spacing:-0.3px">Layer 3</div><div class="a" style="left:1368px;top:462px;width:16px;height:246px;background:#333"></div>
<div class="a" style="left:1370px;top:481px;width:14px;height:154px;background:#5a5a5a"></div>

<svg style="left:1372px;top:696px" width="10" height="7"><path d="M1 1L5 5L9 1" stroke="#bbb" fill="none" stroke-width="1.2"/></svg>
<div class="a" style="left:1130px;top:707px;width:254px;height:30px;background:#3e3e3e"></div>
<div class="a" style="left:1130px;top:707px;width:254px;height:1px;background:#2a2a2a"></div>
<svg style="left:1160px;top:717px" width="200" height="18">
 <path d="M9 5H5A3.5 3.5 0 0 0 5 12H9M11 5H15A3.5 3.5 0 0 1 15 12H11M7 8.5H13" stroke="#ccc" stroke-width="1.6" fill="none"/>
 <text x="36" y="13" font-size="13" font-style="italic" fill="#ddd" font-family="Liberation Serif">fx</text>
 <rect x="62" y="2" width="14" height="12" fill="#ddd"/><circle cx="69" cy="8" r="3.3" fill="#3e3e3e"/>
 <circle cx="102" cy="8" r="6" fill="#ddd"/><path d="M102 2A6 6 0 0 0 102 14Z" fill="#3e3e3e"/>
 <path d="M123 4H129L131 6H138V15H123Z" fill="#ddd"/>
 <rect x="152" y="2" width="12" height="13" fill="none" stroke="#ddd" stroke-width="1.5"/><path d="M155 9H161M158 6V12" stroke="#ddd" stroke-width="1.3"/>
 <path d="M180 4H193M185 2H189M182 5V15H191V5M185 7V13M188 7V13" stroke="#ddd" stroke-width="1.5" fill="none"/>
</svg>
<div id="caption" class="a">Class 7 - The Path to the Boss: Receding into the Horizon</div>
</body></html>
